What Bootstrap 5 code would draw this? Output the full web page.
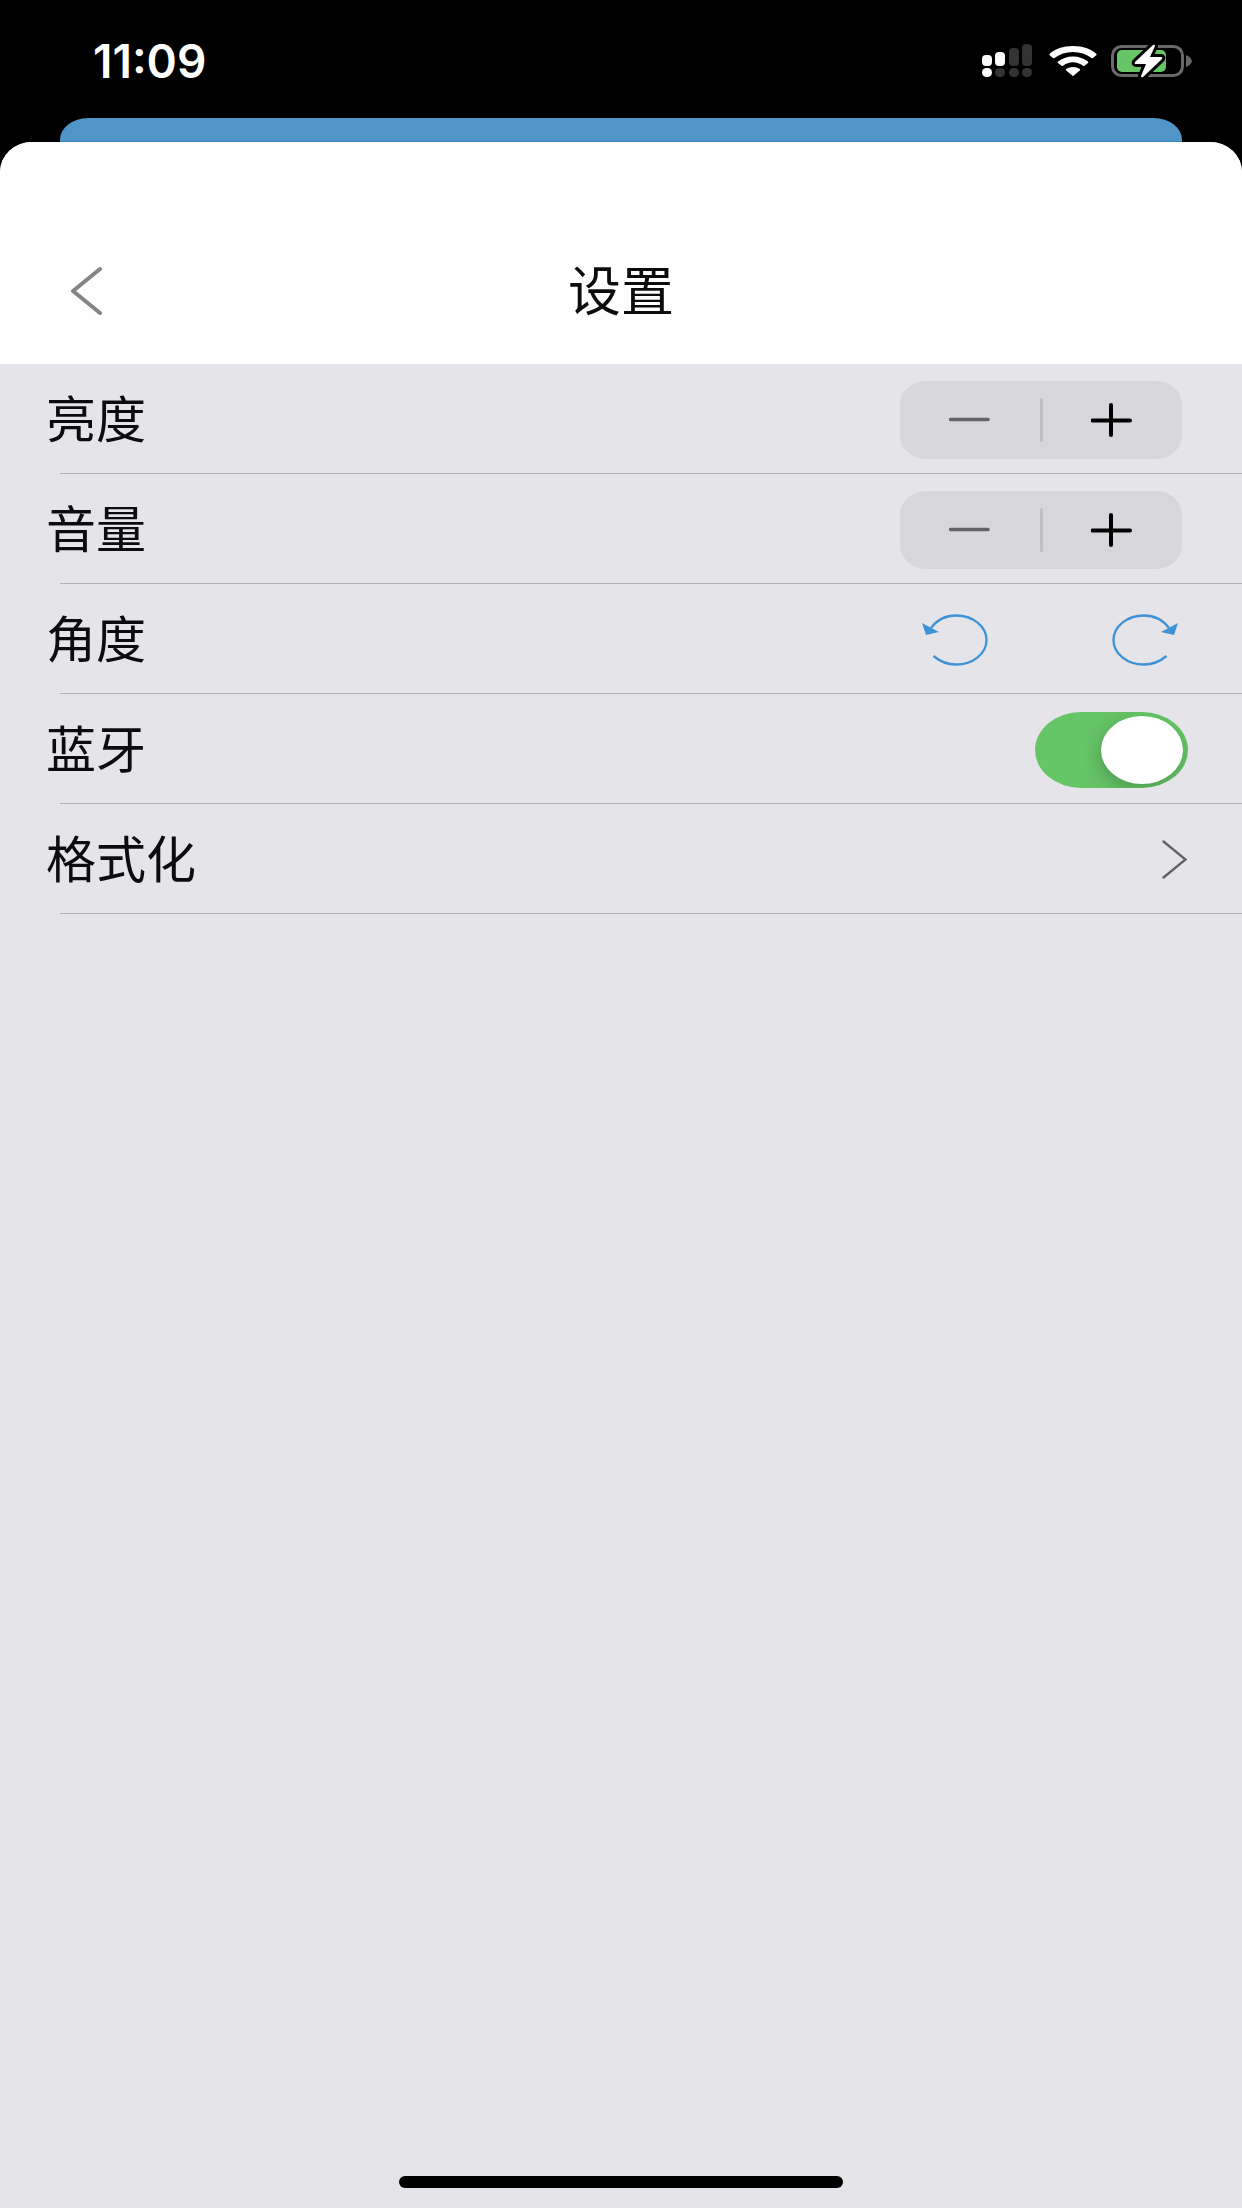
<!DOCTYPE html>
<html lang="zh-CN">
<head>
<meta charset="utf-8">
<meta name="viewport" content="width=device-width, initial-scale=1">
<title>设置</title>
<link href="https://cdn.jsdelivr.net/npm/bootstrap@5.3.0/dist/css/bootstrap.min.css" rel="stylesheet">
<style>
body { background: #000; font-family: "Liberation Sans", "Noto Sans CJK SC", sans-serif; color: #0c0c0e; }
svg { display: block; flex: none; }
.status-bar { height: 118px; padding: 4px 50px 0 93px; color: #fff; }
.clock { font: 600 46px/48px Inter, sans-serif; }
.signal-icon { margin-right: 17px; }
.wifi-icon { margin-right: 14px; }
.back-sheet { height: 24px; margin: 0 60px; background: #4f95c8; border-bottom: 1px solid #2f86c2; border-radius: 28px 28px 0 0 / 22px 22px 0 0; }
.sheet { background: #e5e4e9; border-radius: 32px 32px 0 0 / 30px 30px 0 0; overflow: hidden; }
.sheet-head { height: 222px; padding: 74px 60px 0; background: #fefefe; }
.side { width: 54px; height: 70px; }
.title-text { font-size: 53px; line-height: 60px; font-weight: 400; padding-top: 6px; }
.setting { height: 110px; padding: 2px 54px 0 46px; background: linear-gradient(#b4b3b8, #b4b3b8) 60px 100% / 100% 1px no-repeat; color: inherit; }
.setting-name { font-size: 50px; line-height: 60px; padding-top: 2px; }
.stepper { width: 282px; height: 78px; margin-right: 6px; border-radius: 26px / 24px; background: #d7d6db; }
.stepper .btn { --bs-btn-border-width: 0; color: #000; }
.stepper .btn:disabled { color: #636366; opacity: 1; }
.split { width: 3px; height: 44px; background: #c0bfc4; border-radius: 2px; }
.turns { gap: 124px; margin-right: 10px; color: #3d93d6; }
.toggle.form-check-input { width: 153px; height: 76px; margin: 0; border: 0; border-radius: 46px / 38px; padding: 4px 5px; background: #a9a9ae; display: flex; overflow: hidden; }
.toggle.form-check-input::before { content: ""; width: 82px; height: 68px; border-radius: 50%; background: #fff; box-shadow: -2px 6px 18px rgba(0,0,0,.22); }
.toggle.form-check-input:checked { background: #66c567; justify-content: flex-end; }
.home-bar { width: 444px; height: 12px; margin-bottom: 20px; border-radius: 6px; background: #000; }
</style>
<script src="https://cdn.jsdelivr.net/npm/bootstrap@5.3.0/dist/js/bootstrap.bundle.min.js"></script>
</head>
<body>
<div class="d-flex flex-column min-vh-100">
  <div class="status-bar d-flex align-items-center">
    <span class="clock me-auto">11:09</span>
    <svg class="signal-icon" width="50" height="34" viewBox="0 0 50 34" aria-hidden="true">
      <g fill="#fff"><rect x="0" y="11" width="10" height="11" rx="4"/><rect x="13" y="8" width="10" height="14" rx="4"/><rect x="0" y="24" width="10" height="9" rx="4.5"/></g>
      <g fill="#333"><rect x="27" y="4" width="10" height="18" rx="4"/><rect x="40" y="0" width="10" height="22" rx="4"/><rect x="13" y="24" width="10" height="9" rx="4.5"/><rect x="27" y="24" width="10" height="9" rx="4.5"/><rect x="40" y="24" width="10" height="9" rx="4.5"/></g>
    </svg>
    <svg class="wifi-icon" width="48" height="32" viewBox="0 0 48 32" aria-hidden="true">
      <g fill="#fff"><path d="M24 1C14 1 6 4 .7 8.800Q0 9.500.700 10.200L4 13Q4.700 13.500 5.500 13C10.500 9 17 7 24 7s13.500 2 18.500 6q.800.500 1.500 0l3.300-2.800q.700-.700 0-1.400C42 4 34 1 24 1Z"/><path d="M24 11.500c-6 0-11 2-15 5q-.700.700 0 1.400l3.500 2.800q.700.500 1.500 0c3-2.200 6.200-3.400 10-3.400s7 1.200 10 3.400q.800.500 1.500 0l3.500-2.800q.700-.700 0-1.400c-4-3-9-5-15-5Z"/><path d="M24 22c-2.700 0-5 .800-6.800 2q-.800.700 0 1.400l6 5.200q.800.700 1.600 0l6-5.200q.800-.700 0-1.400C29 22.800 26.700 22 24 22Z"/></g>
    </svg>
    <svg width="81" height="34" viewBox="0 0 81 34" aria-hidden="true">
      <rect x="1.500" y="2.500" width="70" height="29" rx="9" fill="none" stroke="#69696b" stroke-width="3"/>
      <path d="M75 11q5 2 6 6-1 4-6 6Z" fill="#69696b"/>
      <rect x="6" y="6" width="49" height="22" rx="5" fill="#66c567"/>
      <path d="M42 1 24 18q-1 2 1 2h10l-5 12q0 2 2 1L51 15q1-2-1-2H39l5-11q0-2-2-1Z" fill="#fff" stroke="#000" stroke-width="6" stroke-linejoin="round" paint-order="stroke"/>
    </svg>
  </div>
  <div class="back-sheet"></div>
  <main class="sheet d-flex flex-column flex-grow-1">
    <header class="sheet-head d-flex align-items-center justify-content-between">
      <button type="button" class="side btn border-0 p-0 d-flex align-items-center ps-2" aria-label="返回">
        <svg width="40" height="50" viewBox="0 0 40 50" fill="none" stroke="#858585" stroke-width="4" stroke-linecap="round" stroke-linejoin="round"><path d="M32 4 5 26l27 22"/></svg>
      </button>
      <h1 class="title-text mb-0">设置</h1>
      <span class="side"></span>
    </header>
    <div>
      <div class="setting d-flex align-items-center justify-content-between">
        <span class="setting-name" id="bright">亮度</span>
        <div class="stepper d-flex align-items-center" role="group" aria-labelledby="bright">
          <button type="button" class="btn p-0 h-100 flex-fill" disabled aria-label="降低亮度"><svg class="mx-auto" width="42" height="34" viewBox="0 0 42 34"><path d="M1.500 16.500h37.500" stroke="currentColor" stroke-width="3.500" stroke-linecap="round"/></svg></button>
          <span class="split"></span>
          <button type="button" class="btn p-0 h-100 flex-fill" aria-label="提高亮度"><svg class="mx-auto" width="42" height="34" viewBox="0 0 42 34"><path d="M1.500 17.500h37.500M20 2v30" stroke="currentColor" stroke-width="4" stroke-linecap="round"/></svg></button>
        </div>
      </div>
      <div class="setting d-flex align-items-center justify-content-between">
        <span class="setting-name" id="volume">音量</span>
        <div class="stepper d-flex align-items-center" role="group" aria-labelledby="volume">
          <button type="button" class="btn p-0 h-100 flex-fill" disabled aria-label="降低音量"><svg class="mx-auto" width="42" height="34" viewBox="0 0 42 34"><path d="M1.500 16.500h37.500" stroke="currentColor" stroke-width="3.500" stroke-linecap="round"/></svg></button>
          <span class="split"></span>
          <button type="button" class="btn p-0 h-100 flex-fill" aria-label="提高音量"><svg class="mx-auto" width="42" height="34" viewBox="0 0 42 34"><path d="M1.500 17.500h37.500M20 2v30" stroke="currentColor" stroke-width="4" stroke-linecap="round"/></svg></button>
        </div>
      </div>
      <div class="setting d-flex align-items-center justify-content-between">
        <span class="setting-name" id="angle">角度</span>
        <div class="turns d-flex" role="group" aria-labelledby="angle">
          <button type="button" class="btn border-0 p-0" aria-label="向左旋转"><svg width="66" height="52" viewBox="0 0 66 52"><path d="M9 14C15 6 24 1.500 34 1.500c17 0 30.500 11 30.500 24.500S51 50.500 34 50.500c-8 0-16-3-22.500-8.500" fill="none" stroke="#3d93d6" stroke-width="2.300"/><path d="m0 9 17 9-13 3Z" fill="#3d93d6"/></svg></button>
          <button type="button" class="btn border-0 p-0" aria-label="向右旋转"><svg width="66" height="52" viewBox="0 0 66 52"><path d="M57 14C51 6 42 1.500 32 1.500 15 1.500 1.500 12.500 1.500 26S15 50.500 32 50.500c8 0 16-3 22.500-8.500" fill="none" stroke="#3d93d6" stroke-width="2.300"/><path d="m66 9-17 9 13 3Z" fill="#3d93d6"/></svg></button>
        </div>
      </div>
      <div class="setting d-flex align-items-center justify-content-between">
        <label class="setting-name" for="bluetooth">蓝牙</label>
        <input class="form-check-input toggle" type="checkbox" role="switch" id="bluetooth" checked>
      </div>
      <a href="#" class="setting d-flex align-items-center justify-content-between text-decoration-none">
        <span class="setting-name">格式化</span>
        <svg width="26" height="40" viewBox="0 0 26 40" fill="none" stroke="#626264" stroke-width="2.300" stroke-linecap="round" aria-hidden="true"><path d="M1.500 1.500 23.500 19.500 1.500 37.500"/></svg>
      </a>
    </div>
    <div class="home-bar mt-auto mx-auto"></div>
  </main>
</div>
</body>
</html>
